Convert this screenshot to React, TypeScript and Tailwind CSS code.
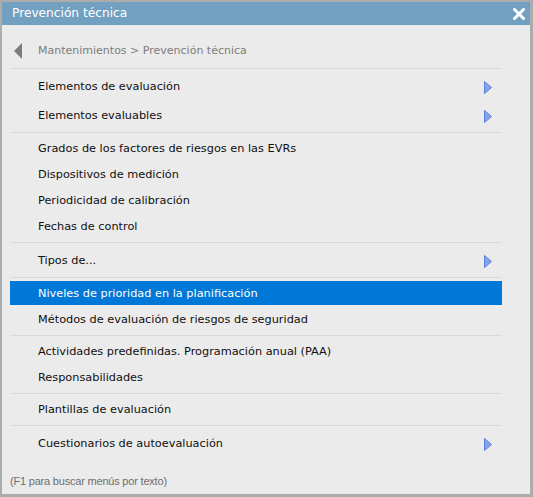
import React from "react";

type Item = { label: string; sub?: boolean; active?: boolean };

const groups: Item[][] = [
  [
    { label: "Elementos de evaluación", sub: true },
    { label: "Elementos evaluables", sub: true },
  ],
  [
    { label: "Grados de los factores de riesgos en las EVRs" },
    { label: "Dispositivos de medición" },
    { label: "Periodicidad de calibración" },
    { label: "Fechas de control" },
  ],
  [{ label: "Tipos de...", sub: true }],
  [
    { label: "Niveles de prioridad en la planificación", active: true },
    { label: "Métodos de evaluación de riesgos de seguridad" },
  ],
  [
    { label: "Actividades predefinidas. Programación anual (PAA)" },
    { label: "Responsabilidades" },
  ],
  [{ label: "Plantillas de evaluación" }],
  [{ label: "Cuestionarios de autoevaluación", sub: true }],
];

function SubArrow() {
  return (
    <svg width="8" height="13" viewBox="0 0 8 13" className="shrink-0 ml-[1px]">
      <polygon points="0.5,0.5 7.5,6.5 0.5,12.5" fill="#86a4ea" stroke="#5a7fdc" strokeWidth="1" />
    </svg>
  );
}

function MenuRow({ item }: { item: Item }) {
  const h = item.sub ? "h-[29px]" : "h-[26px]";
  return (
    <div className={`${h} flex items-start`}>
      <div
        className={`w-full flex items-center pl-[28px] pr-[10px] ${
          item.sub ? "h-[29px] pt-[1px]" : "h-[24px] pt-[3px]"
        } ${item.active ? "bg-[#0078d7] text-white" : "text-[#101010]"}`}
      >
        <span className={`flex-1 ${item.sub ? "pt-[1px]" : ""}`}>{item.label}</span>
        {item.sub && <SubArrow />}
      </div>
    </div>
  );
}

export default function App() {
  return (
    <div
      className="w-[533px] h-[497px] flex flex-col bg-[#ebebeb] border-l-2 border-t-2 border-r-[3px] border-b-[3px] border-[#acacac]"
      style={{ fontFamily: "'DejaVu Sans', Verdana, sans-serif" }}
    >
      <div className="h-[23px] shrink-0 bg-[#72a0c1] flex items-center pl-[10px] pr-[5px] text-white text-[12.2px]">
        <span className="flex-1">Prevención técnica</span>
        <svg width="12" height="12" viewBox="0 0 12 12">
          <path d="M1.5 1.5 L10.5 10.5 M10.5 1.5 L1.5 10.5" stroke="#fff" strokeWidth="3" strokeLinecap="square" />
        </svg>
      </div>

      <div className="flex-1 flex flex-col pl-[8px] pr-[28px] text-[11.3px]">
        <div className="pt-[18px] pb-[9px] flex items-center h-[43px] shrink-0">
          <svg width="8" height="16" viewBox="0 0 8 16" className="ml-[4px]">
            <polygon points="8,0 0,8 8,16" fill="#7c7c7c" />
          </svg>
          <span className="ml-[16px] text-[#7d7d7d] text-[11px]">Mantenimientos &gt; Prevención técnica</span>
        </div>

        {groups.map((g, i) => (
          <div key={i} className="border-t border-[#d9d9d9] pt-[3px] pb-[2px]">
            {g.map((item) => (
              <MenuRow key={item.label} item={item} />
            ))}
          </div>
        ))}

        <div
          className="mt-auto h-[34px] flex items-center pt-[8px] text-[11px] tracking-[-0.2px] text-[#6e6e6e]"
          style={{ fontFamily: "'Liberation Sans', Arial, sans-serif" }}
        >
          (F1 para buscar menús por texto)
        </div>
      </div>
    </div>
  );
}
